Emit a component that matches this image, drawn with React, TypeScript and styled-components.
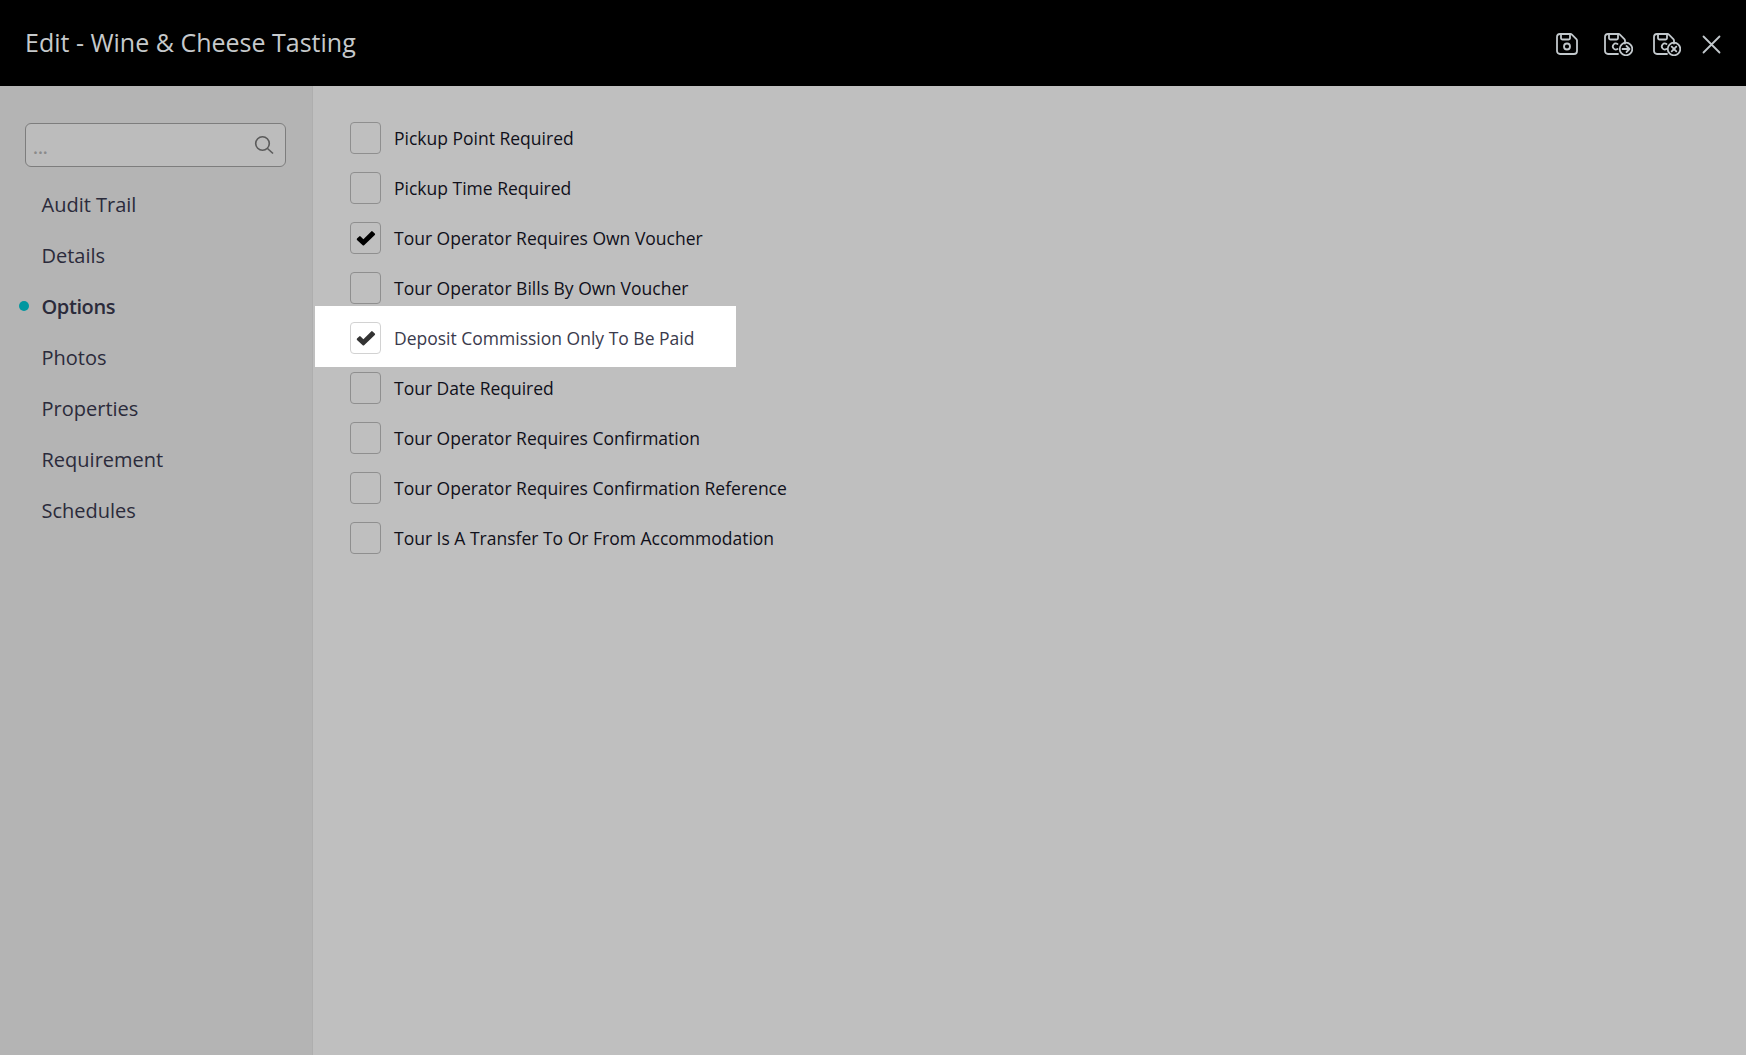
import styled, { createGlobalStyle } from "styled-components";

const navItems = [
  "Audit Trail",
  "Details",
  "Options",
  "Photos",
  "Properties",
  "Requirement",
  "Schedules",
];

const options = [
  { label: "Pickup Point Required", checked: false },
  { label: "Pickup Time Required", checked: false },
  { label: "Tour Operator Requires Own Voucher", checked: true },
  { label: "Tour Operator Bills By Own Voucher", checked: false },
  { label: "Deposit Commission Only To Be Paid", checked: true, highlighted: true },
  { label: "Tour Date Required", checked: false },
  { label: "Tour Operator Requires Confirmation", checked: false },
  { label: "Tour Operator Requires Confirmation Reference", checked: false },
  { label: "Tour Is A Transfer To Or From Accommodation", checked: false },
];

const FloppyBody = ({ open }: { open?: boolean }) => (
  <>
    {open ? (
      <path d="M14 21H4a3 3 0 0 1-3-3V4a3 3 0 0 1 3-3h10.5a2 2 0 0 1 1.4.6l4.5 4.5a2 2 0 0 1 .6 1.4v3" />
    ) : (
      <path d="M4 1h10.5a2 2 0 0 1 1.4.6l4.5 4.5a2 2 0 0 1 .6 1.4V18a3 3 0 0 1-3 3H4a3 3 0 0 1-3-3V4a3 3 0 0 1 3-3z" />
    )}
    <path d="M5 1v4a1.5 1.5 0 0 0 1.5 1.5h6A1.5 1.5 0 0 0 14 5V1" />
  </>
);

const SaveIcon = () => (
  <ActionSvg width="28" height="24" viewBox="0 -1 28 24">
    <FloppyBody />
    <circle cx="11" cy="13.5" r="3" />
  </ActionSvg>
);

const SaveNextIcon = () => (
  <ActionSvg width="29" height="24" viewBox="0 -1 29 24">
    <FloppyBody open />
    <path d="M13.5 11a3 3 0 1 0 0 5" />
    <circle cx="22" cy="16" r="6.3" />
    <path d="M18.5 16h6.5M22.5 13l3 3-3 3" />
  </ActionSvg>
);

const SaveCloseIcon = () => (
  <ActionSvg width="28" height="24" viewBox="0 -1 28 24">
    <FloppyBody open />
    <path d="M13.5 11a3 3 0 1 0 0 5" />
    <circle cx="21" cy="16" r="6.3" />
    <path d="M18.7 13.7l4.6 4.6M23.3 13.7l-4.6 4.6" />
  </ActionSvg>
);

const CloseIcon = () => (
  <ActionSvg width="21" height="24" viewBox="0 0 21 24">
    <path d="M2.5 4.5l16 16M18.5 4.5l-16 16" />
  </ActionSvg>
);

const CheckIcon = () => (
  <svg width="20" height="16" viewBox="0 0 20 16" fill="currentColor">
    <path d="M1 8.6 3.2 6.4a1 1 0 0 1 1.4 0L7.4 9.2 15.2 1.4a1 1 0 0 1 1.4 0l2.2 2.2a1 1 0 0 1 0 1.4L8.1 15.2a1 1 0 0 1-1.4 0L1 9.9a1 1 0 0 1 0-1.3z" />
  </svg>
);

export default function App() {
  return (
    <>
      <GlobalStyle />
      <Page>
        <Header>
          <Title>Edit - Wine &amp; Cheese Tasting</Title>
          <Actions>
            <SaveIcon />
            <SaveNextIcon />
            <SaveCloseIcon />
            <CloseIcon />
          </Actions>
        </Header>
        <Body>
          <Sidebar>
            <SearchBox>
              <SearchInput placeholder="..." readOnly size={1} />
              <svg width="20" height="20" viewBox="0 0 20 20" fill="none" stroke="#5a5a5a" strokeWidth="1.6">
                <circle cx="8.5" cy="8.5" r="6.8" />
                <path d="M13.5 13.5l5.5 5" />
              </svg>
            </SearchBox>
            <Nav>
              {navItems.map((item) => (
                <NavItem key={item} $active={item === "Options"}>
                  {item}
                </NavItem>
              ))}
            </Nav>
          </Sidebar>
          <Content>
            {options.map((option) => (
              <OptionRow key={option.label} $highlighted={option.highlighted}>
                <Checkbox $highlighted={option.highlighted}>
                  {option.checked && <CheckIcon />}
                </Checkbox>
                <OptionLabel>{option.label}</OptionLabel>
              </OptionRow>
            ))}
          </Content>
        </Body>
      </Page>
    </>
  );
}

const GlobalStyle = createGlobalStyle`
  * {
    box-sizing: border-box;
  }

  html, body {
    margin: 0;
    height: 100%;
  }

  body {
    font-family: "Open Sans", sans-serif;
    background: #bfbfbf;
  }
`;

const Page = styled.div`
  display: flex;
  flex-direction: column;
  width: 100%;
  height: 100vh;
  overflow: hidden;
`;

const Header = styled.header`
  display: flex;
  align-items: center;
  justify-content: space-between;
  flex: 0 0 86px;
  padding: 0 24px 0 25px;
  background: #000;
`;

const Title = styled.h1`
  margin: 0 0 3px;
  font-size: 25px;
  font-weight: 400;
  color: #c6c9cb;
`;

const Actions = styled.div`
  display: flex;
  align-items: center;
  gap: 20px;
  margin-top: 1px;
`;

const ActionSvg = styled.svg`
  fill: none;
  stroke: #c2c8cc;
  stroke-width: 1.8;
  stroke-linecap: round;
  stroke-linejoin: round;
`;

const Body = styled.div`
  display: grid;
  grid-template-columns: 313px 1fr;
  flex: 1;
  min-height: 0;
`;

const Sidebar = styled.aside`
  min-width: 0;
  padding: 37px 26px 0 25px;
  background: #b4b4b4;
  border-right: 1px solid #aeaeae;
`;

const SearchBox = styled.div`
  display: flex;
  align-items: center;
  height: 44px;
  padding: 0 11px 0 7px;
  background: #bcbcbc;
  border: 1px solid #7d7d7d;
  border-radius: 6px;
`;

const SearchInput = styled.input`
  flex: 1;
  min-width: 0;
  padding: 4px 0 0;
  border: none;
  outline: none;
  background: transparent;
  font-family: inherit;
  font-size: 18px;
  font-weight: 600;

  &::placeholder {
    color: #8a8a8a;
  }
`;

const Nav = styled.nav`
  display: flex;
  flex-direction: column;
  margin-top: 12px;
  padding-left: 16.5px;
`;

const NavItem = styled.div<{ $active?: boolean }>`
  position: relative;
  height: 51px;
  line-height: 51px;
  font-size: 20px;
  font-weight: ${({ $active }) => ($active ? 600 : 400)};
  letter-spacing: ${({ $active }) => ($active ? "-0.4px" : "0")};
  color: #2b2b3b;

  ${({ $active }) =>
    $active &&
    `
    &::before {
      content: "";
      position: absolute;
      left: -22.5px;
      top: 20px;
      width: 10px;
      height: 10px;
      border-radius: 50%;
      background: #0097a0;
    }
  `}
`;

const Content = styled.main`
  display: flex;
  flex-direction: column;
  align-items: flex-start;
  padding: 27px 0 0 37px;
`;

const OptionRow = styled.div<{ $highlighted?: boolean }>`
  display: flex;
  align-items: center;
  gap: 13px;
  height: 50px;
  color: #10101a;

  ${({ $highlighted }) =>
    $highlighted &&
    `
    width: 421px;
    height: 61px;
    margin: -7.5px 0 -3.5px -35px;
    padding: 4px 0 0 35px;
    background: #fff;
    color: #3a3a4c;
  `}
`;

const Checkbox = styled.span<{ $highlighted?: boolean }>`
  display: flex;
  align-items: center;
  justify-content: center;
  width: 31px;
  height: 32px;
  border: 1px solid ${({ $highlighted }) => ($highlighted ? "#d2d2d2" : "#8f8f8f")};
  border-radius: 4px;
  background: ${({ $highlighted }) => ($highlighted ? "#fff" : "transparent")};
  color: ${({ $highlighted }) => ($highlighted ? "#333" : "#000")};
`;

const OptionLabel = styled.span`
  margin-top: -1px;
  font-size: 17.5px;
`;
